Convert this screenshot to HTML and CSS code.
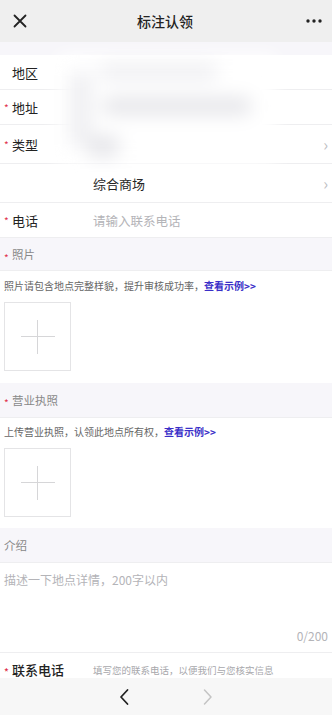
FILE: index.html
```html
<!DOCTYPE html>
<html lang="zh-CN">
  <head>
    <meta charset="UTF-8" />
    <meta name="viewport" content="width=device-width, initial-scale=1.0" />
    <title>标注认领</title>
    <link rel="stylesheet" href="styles.css">
  </head>
  <body>
    <div class="page">
      <div class="nav">
        <svg class="nav-close" width="14" height="14" viewBox="0 0 14 14">
          <path d="M1.5 1.5L12.5 12.5M12.5 1.5L1.5 12.5" stroke="#222" stroke-width="1.8" stroke-linecap="round" />
        </svg>
        <span class="nav-title">标注认领</span>
        <svg class="nav-more" width="16" height="4" viewBox="0 0 16 4">
          <circle cx="2" cy="2" r="1.7" fill="#222" />
          <circle cx="8" cy="2" r="1.7" fill="#222" />
          <circle cx="14" cy="2" r="1.7" fill="#222" />
        </svg>
      </div>

      <div class="content">
        <div class="group">
          <div class="row"><span class="label">地区</span></div>
          <div class="row"><span class="label req">地址</span></div>
          <div class="row tall">
            <span class="label req">类型</span>
            <span class="chev">›</span>
          </div>
          <div class="row tall">
            <span class="label"></span>
            <span class="value">综合商场</span>
            <span class="chev">›</span>
          </div>
          <div class="row">
            <span class="label req">电话</span>
            <span class="placeholder">请输入联系电话</span>
          </div>
          <!-- blurred private values -->
          <div class="mask">
            <span class="blob b1"></span>
            <span class="blob b2"></span>
            <span class="blob b3"></span>
            <span class="blob b4"></span>
          </div>
        </div>

        <div class="section-head req">照片</div>
        <div class="upload">
          <p class="hint">照片请包含地点完整样貌，提升审核成功率，<a class="link">查看示例&gt;&gt;</a></p>
          <div class="add-box"><span class="plus"></span></div>
        </div>

        <div class="section-head tall req">营业执照</div>
        <div class="upload second">
          <p class="hint">上传营业执照，认领此地点所有权，<a class="link">查看示例&gt;&gt;</a></p>
          <div class="add-box"><span class="plus"></span></div>
        </div>

        <div class="section-head tall">介绍</div>
        <div class="intro">
          <p class="intro-text">描述一下地点详情，200字以内</p>
          <span class="counter">0/200</span>
        </div>

        <div class="row contact">
          <span class="label req strong">联系电话</span>
          <span class="contact-hint">填写您的联系电话，以便我们与您核实信息</span>
        </div>
      </div>

      <div class="toolbar">
        <svg width="12" height="18" viewBox="0 0 12 18">
          <path d="M9.5 2L3 9l6.5 7" fill="none" stroke="#222" stroke-width="1.8" stroke-linecap="round" stroke-linejoin="round" />
        </svg>
        <svg width="12" height="18" viewBox="0 0 12 18">
          <path d="M2.5 2L9 9l-6.5 7" fill="none" stroke="#c4c4c4" stroke-width="1.5" stroke-linecap="round" stroke-linejoin="round" />
        </svg>
      </div>
    </div>
  </body>
</html>
```

FILE: styles.css
```css
* {
  box-sizing: border-box;
}
body {
  margin: 0;
  background: #f7f6fa;
  color: #222;
  font-family: "Noto Sans CJK SC", "Noto Sans", sans-serif;
}
.page {
  display: flex;
  flex-direction: column;
  width: 332px;
  height: 715px;
  overflow: hidden;
}

/* Nav bar */
.nav {
  display: flex;
  align-items: center;
  justify-content: space-between;
  height: 42px;
  padding: 0 10px 0 13px;
  background: #efefef;
  flex-shrink: 0;
}
.nav-title {
  font-size: 14px;
  font-weight: 500;
  color: #222;
  margin-right: 3px;
}

.content {
  flex: 1;
  overflow: hidden;
  padding-top: 13px;
}

/* Form rows */
.group {
  position: relative;
  background: #fff;
}
.row {
  display: flex;
  align-items: center;
  height: 35px;
  padding: 0 4px 0 12px;
  border-bottom: 1px solid #eeeef0;
  background: #fff;
}
.row.tall {
  height: 39px;
}
.label {
  position: relative;
  width: 81px;
  font-size: 13px;
  color: #222;
  flex-shrink: 0;
}
.req::before {
  content: "*";
  position: absolute;
  left: -8px;
  top: 2px;
  color: #e0304a;
  font-size: 10px;
}
.value {
  flex: 1;
  font-size: 13px;
  color: #222;
}
.placeholder {
  font-size: 12.5px;
  color: #b4b4b8;
}
.chev {
  margin-left: auto;
  font-size: 16px;
  color: #c0c0c4;
  line-height: 1;
}

/* Blurred values */
.mask {
  position: absolute;
  left: 58px;
  top: 0;
  width: 218px;
  height: 110px;
  background: #fff;
  filter: blur(9px);
}
.blob {
  position: absolute;
  display: block;
  background: #e6e6ea;
  border-radius: 10px;
}
.b1 {
  left: 40px;
  top: 8px;
  width: 120px;
  height: 18px;
  background: #f0f0f3;
}
.b2 {
  left: 44px;
  top: 42px;
  width: 150px;
  height: 18px;
}
.b3 {
  left: 28px;
  top: 80px;
  width: 34px;
  height: 22px;
}
.b4 {
  left: 12px;
  top: 16px;
  width: 22px;
  height: 76px;
  background: #efeff2;
}

/* Section heads */
.section-head {
  position: relative;
  display: flex;
  align-items: center;
  height: 33px;
  padding-left: 12px;
  font-size: 11.5px;
  color: #888;
  border-bottom: 1px solid #eeeef0;
}
.section-head.tall {
  height: 35px;
}
.section-head.req::before {
  left: 4px;
  top: 12px;
}
.section-head:not(.req) {
  padding-left: 4px;
}

/* Upload blocks */
.upload {
  background: #fff;
  padding: 8px 4px 12px;
}
.upload.second {
  padding: 7px 4px 11px;
}
.hint {
  margin: 0 0 9px;
  font-size: 10px;
  line-height: 14px;
  color: #666;
}
.link {
  color: #3a2fc8;
  font-weight: 700;
}
.add-box {
  position: relative;
  width: 67px;
  height: 69px;
  border: 1px solid #e4e4e6;
}
.plus::before,
.plus::after {
  content: "";
  position: absolute;
  left: 50%;
  top: 50%;
  background: #d6d6d8;
}
.plus::before {
  width: 34px;
  height: 1px;
  margin: -0.5px 0 0 -17px;
}
.plus::after {
  width: 1px;
  height: 34px;
  margin: -17px 0 0 -0.5px;
}

/* Intro textarea */
.intro {
  display: flex;
  flex-direction: column;
  height: 90px;
  padding: 8px 4px 8px;
  background: #fff;
  border-bottom: 1px solid #eeeef0;
}
.intro-text {
  margin: 0;
  font-size: 12px;
  color: #b4b4b8;
}
.counter {
  margin-top: auto;
  align-self: flex-end;
  font-size: 12px;
  color: #b4b4b8;
}

/* Contact */
.contact {
  height: 40px;
  align-items: flex-start;
  padding-top: 8px;
  border-bottom: 0;
}
.strong {
  font-size: 13px;
  line-height: 18px;
  font-weight: 500;
}
.contact-hint {
  font-size: 9.5px;
  line-height: 18px;
  color: #a8a8ac;
}

/* Bottom toolbar */
.toolbar {
  display: flex;
  align-items: center;
  justify-content: center;
  gap: 72px;
  height: 37px;
  background: #f7f7f7;
  flex-shrink: 0;
}
```
